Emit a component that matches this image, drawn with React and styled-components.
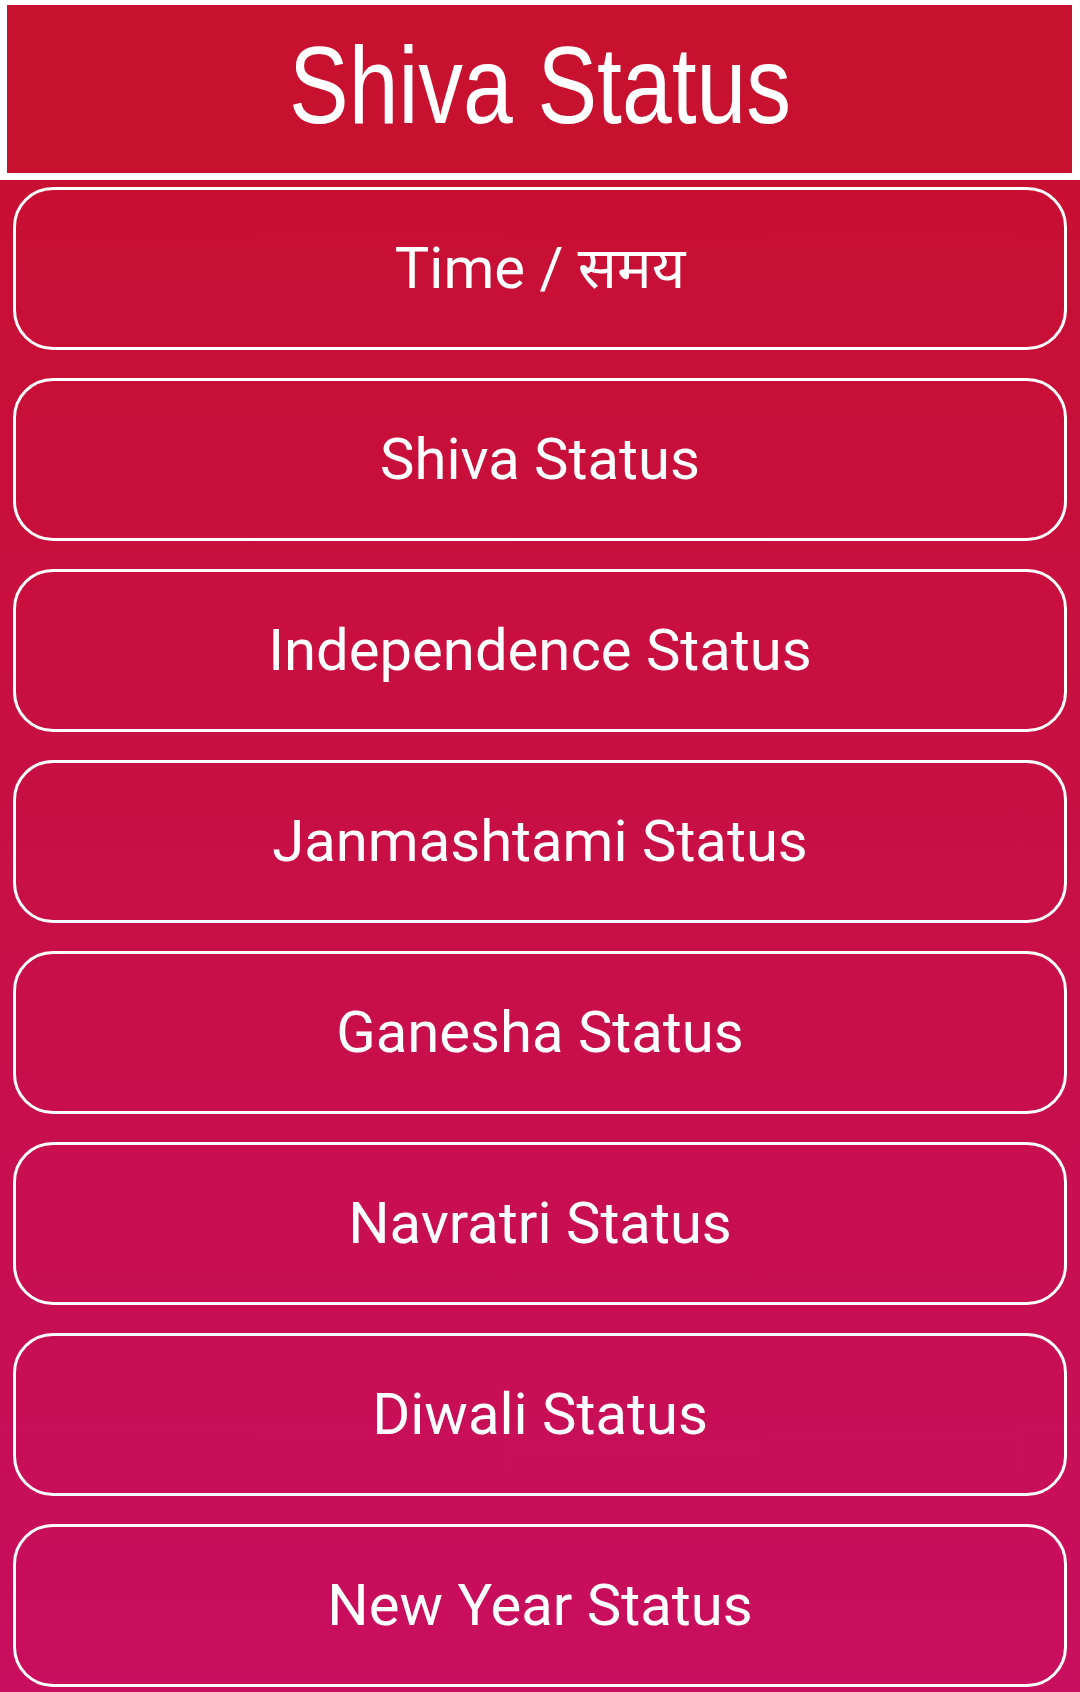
import React from 'react';
import styled, { createGlobalStyle } from 'styled-components';

const GlobalStyle = createGlobalStyle`
    html, body {
        margin: 0;
        padding: 0;
        background: #ffffff;
    }
`

const Page = styled.div`
    width: 1080px;
    min-height: 1692px;
    display: flex;
    flex-direction: column;
    background: #ffffff;
`

const HeaderWrap = styled.div`
    padding: 5px 8px 7px 7px;
    background: #ffffff;
`

const Header = styled.div`
    height: 168px;
    background: #c8102f;
    display: flex;
    align-items: center;
    justify-content: center;
`

const HeaderTitle = styled.h1`
    margin: 0;
    color: #ffffff;
    font-family: "Liberation Sans", Arial, sans-serif;
    font-weight: 400;
    font-size: 109px;
    line-height: 1;
    transform: scaleX(0.82);
    padding-bottom: 8px;
`

const Menu = styled.div`
    flex: 1;
    display: flex;
    flex-direction: column;
    gap: 28px;
    padding: 7px 13px 5px 13px;
    background: linear-gradient(180deg, #c80f32 0%, #c80f48 50%, #c80e5e 100%);
`

const MenuButton = styled.button`
    height: 163px;
    box-sizing: border-box;
    border: 3px solid #ffffff;
    border-radius: 40px;
    background: transparent;
    color: #ffffff;
    font-family: Roboto, "Noto Sans Devanagari", "Noto Sans", sans-serif;
    font-size: 58px;
    font-weight: 400;
    line-height: 1.2;
    display: flex;
    align-items: center;
    justify-content: center;
    padding: 0;
    cursor: pointer;
`

const items = [
    'Time / समय',
    'Shiva Status',
    'Independence Status',
    'Janmashtami Status',
    'Ganesha Status',
    'Navratri Status',
    'Diwali Status',
    'New Year Status',
];

export default function App() {
    return (
        <Page>
            <GlobalStyle />
            <HeaderWrap>
                <Header>
                    <HeaderTitle>Shiva Status</HeaderTitle>
                </Header>
            </HeaderWrap>
            <Menu>
                {items.map((label) => (
                    <MenuButton key={label}>{label}</MenuButton>
                ))}
            </Menu>
        </Page>
    );
}
